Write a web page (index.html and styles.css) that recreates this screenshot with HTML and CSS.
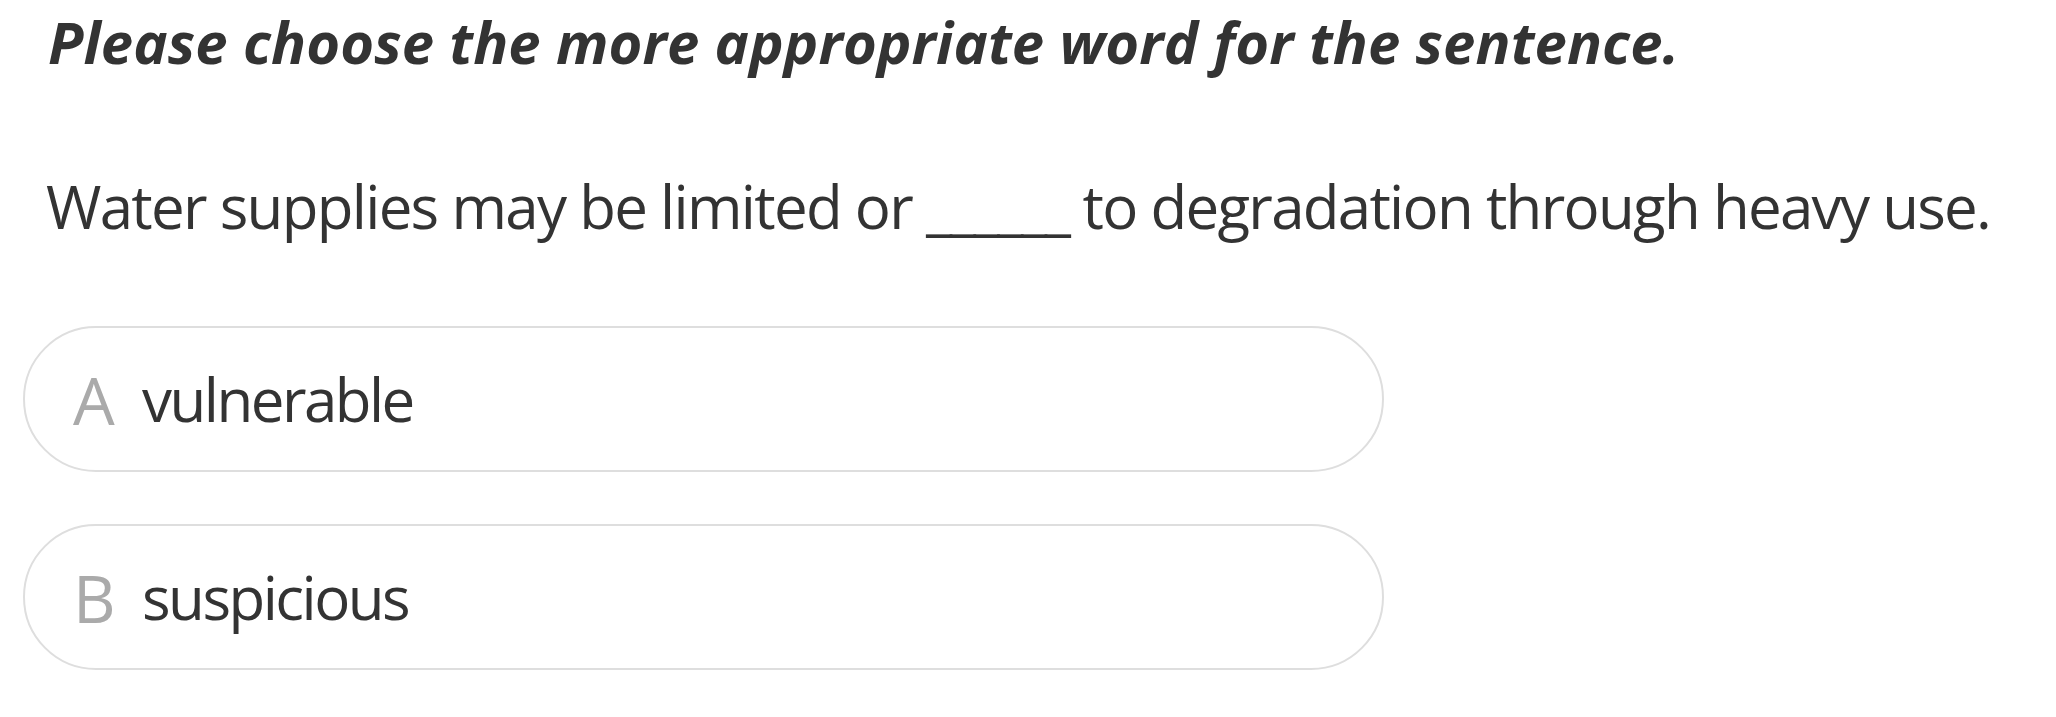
FILE: index.html
```html
<!DOCTYPE html>
<html lang="en">
<head>
<meta charset="utf-8">
<title>Question</title>
<link rel="stylesheet" href="styles.css">
</head>
<body>
<main class="question">
  <h1 class="prompt">Please choose the more appropriate word for the sentence.</h1>
  <p class="sentence">Water supplies may be limited or <span class="blank">______</span> to degradation through heavy use.</p>
  <div class="options">
    <div class="option"><span class="letter">A</span><span class="word">vulnerable</span></div>
    <div class="option"><span class="letter">B</span><span class="word">suspicious</span></div>
  </div>
</main>
</body>
</html>
```

FILE: styles.css
```css
html, body {
  margin: 0;
  padding: 0;
  background: #ffffff;
}

body {
  font-family: "Open Sans", "Noto Sans", sans-serif;
  color: #333333;
}

.question {
  display: flex;
  flex-direction: column;
  padding-top: 2px;
}

.prompt {
  margin: 0 0 0 48px;
  font-size: 58px;
  line-height: 80px;
  font-weight: 700;
  font-style: italic;
  letter-spacing: 0.1px;
}

.sentence {
  margin: 82px 0 0 46px;
  font-size: 60px;
  line-height: 84px;
  letter-spacing: -1.7px;
}

.blank {
  letter-spacing: -2.5px;
}

.options {
  display: flex;
  flex-direction: column;
  gap: 52px;
  margin: 78px 0 0 23px;
}

.option {
  box-sizing: border-box;
  width: 1361px;
  height: 146px;
  border: 2px solid #dedede;
  border-radius: 73px;
  display: flex;
  align-items: center;
  padding-left: 48px;
}

.letter {
  width: 69px;
  flex: none;
  font-size: 66px;
  line-height: 84px;
  color: #aaaaaa;
}

.word {
  font-size: 60px;
  line-height: 84px;
  letter-spacing: -2.5px;
}
```
